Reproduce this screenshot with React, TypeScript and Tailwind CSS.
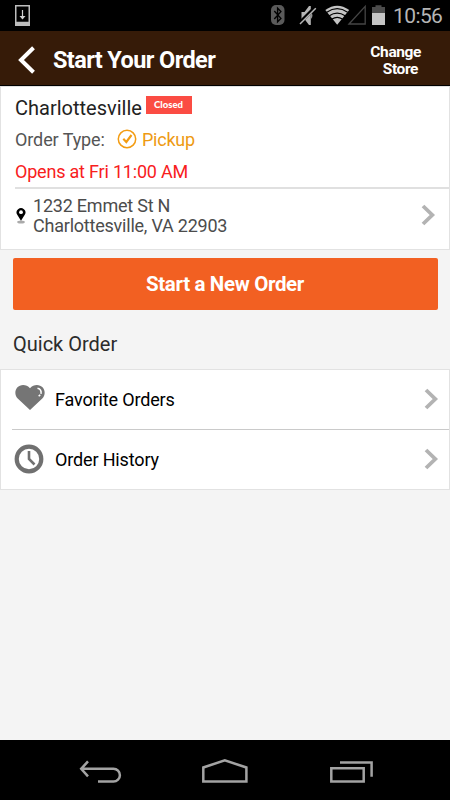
import { clsx } from 'clsx';

function ChevronRight({ className }: { className?: string }) {
  return (
    <svg width="15" height="22" viewBox="0 0 15 22" className={clsx('flex-shrink-0', className)}>
      <path d="M2 2 L11.3 11 L2 20" fill="none" stroke="#b3b3b3" strokeWidth="3.8" />
    </svg>
  );
}

function StatusBar() {
  return (
    <div className="flex h-[31px] items-center justify-between bg-black">
      <svg width="32" height="31" viewBox="0 0 32 31">
        <path d="M15 5h15v21H15z M16.5 6.5v15.3h12V6.5z" fill="#bdbdbd" fillRule="evenodd" />
        <path d="M22.5 10v8" stroke="#d0d0d0" strokeWidth="1.2" />
        <path d="M19.5 16h6l-3 3.6z" fill="#d0d0d0" />
      </svg>
      <div className="flex items-center">
        <svg width="130" height="31" viewBox="262 0 130 31">
          {/* bluetooth */}
          <rect x="271" y="5" width="13.5" height="20" rx="5" fill="#5a5a5a" />
          <path d="M274.3 11l6.6 7.4-3.3 3.4V8.2l3.3 3.4-6.6 7.4" fill="none" stroke="#000" strokeWidth="1.4" />
          {/* muted ringer */}
          <path d="M301.5 12h3l4.5-6h1.8v19H309l-4.5-6h-3z" fill="#b5b5b5" />
          <path d="M311.2 12q2.4 3.5 0 7z" fill="#b5b5b5" />
          <path d="M299 23.5L315.3 7.2" stroke="#000" strokeWidth="3.6" />
          <path d="M300 24L315.8 8.2" stroke="#b5b5b5" strokeWidth="1.5" />
          {/* wifi */}
          <path d="M325.3 10Q337.2 1.5 349.2 10L337.2 24.7z" fill="#c4c4c4" />
          <g fill="none" stroke="#000" strokeWidth="1.2">
            <path d="M326.8 12.2q10.4-7 20.8 0" />
            <path d="M329.3 15.7q7.9-5.2 15.8 0" />
            <path d="M332 19q5.2-3.3 10.4 0" />
          </g>
          {/* signal */}
          <path d="M349 24L365.2 6.3V24z" fill="none" stroke="#454545" strokeWidth="1.3" />
          {/* battery */}
          <path d="M372 7h3.5V5.2h6V7h3.5v6h-13z" fill="#4c4c4c" />
          <path d="M372 13h13v12h-13z" fill="#c4c4c4" />
        </svg>
        <span className="w-[58px] pl-[1px] pt-[2px] text-[21px] leading-[31px] tracking-[-0.6px] text-[#b5b5b5]">10:56</span>
      </div>
    </div>
  );
}

function Header() {
  return (
    <header className="flex h-[55px] items-center border-b border-black bg-[#361b08] text-white">
      <svg width="53" height="54" viewBox="0 31 53 54" className="flex-shrink-0">
        <path d="M33.5 47.8L21 60l12.5 12.2" fill="none" stroke="#fff" strokeWidth="4" />
      </svg>
      <h1 className="flex-1 whitespace-nowrap pt-[3px] text-[23.5px] font-bold leading-[30px] tracking-[-0.6px]">Start Your Order</h1>
      <div className="mr-[29px] flex flex-col items-end whitespace-nowrap pt-[6px] text-[15.5px] font-bold leading-[17px] tracking-[-0.4px]">
        <span>Change</span>
        <span className="pr-[3px]">Store</span>
      </div>
    </header>
  );
}

function StoreCard() {
  return (
    <section className="h-[164px] border border-[#e2e2e2] bg-white pl-[14px]">
      <div className="flex h-[37px] items-start">
        <h2 className="w-[131px] whitespace-nowrap pt-[8px] text-[20px] leading-[26px] text-[#222]">Charlottesville</h2>
        <span className="mt-[9px] h-[18px] w-[46px] bg-[#fb4c43] pr-[1px] text-center font-[Lato,sans-serif] text-[9.5px] font-black leading-[18px] text-white">
          Closed
        </span>
      </div>
      <div className="flex h-[31px] items-center text-[18px] tracking-[-0.1px]">
        <span className="w-[101px] whitespace-nowrap text-[#555]">Order Type:</span>
        <svg width="26" height="22" viewBox="0 0 26 22" className="mb-[1px] flex-shrink-0">
          <circle cx="11" cy="11" r="8.7" fill="none" stroke="#f39c12" strokeWidth="1.5" />
          <path d="M7.3 10.8l3 3.2L15.5 7" fill="none" stroke="#f39c12" strokeWidth="2.1" />
        </svg>
        <span className="tracking-[-0.25px] text-[#ee9a12]">Pickup</span>
      </div>
      <p className="h-[32px] whitespace-nowrap text-[18px] leading-[33px] tracking-[-0.2px] text-[#f8201c]">Opens at Fri 11:00 AM</p>
      <div className="flex h-[62px] items-center border-t-2 border-[#e0e0e0]">
        <svg width="18" height="20" viewBox="0 0 18 20" className="-mt-[6px] flex-shrink-0">
          <ellipse cx="6" cy="16" rx="3.8" ry="1.5" fill="#aaa" />
          <path d="M6 14.7L2.4 9A4.4 4.4 0 1 1 9.6 9z" fill="#000" />
          <circle cx="6" cy="6.2" r="1.9" fill="#fff" />
        </svg>
        <address className="flex-1 whitespace-nowrap pb-[6px] text-[18px] not-italic leading-[20px] tracking-[-0.22px] text-[#4c4c4c]">
          1232 Emmet St N
          <br />
          Charlottesville, VA 22903
        </address>
        <ChevronRight className="mr-[13px] -mt-[8px]" />
      </div>
    </section>
  );
}

function HeartIcon() {
  return (
    <svg width="30" height="27" viewBox="0 0 30 27">
      <path d="M15 26L2.7 14.5C-.5 11-.2 6.5 2.2 3.6C5.500 0 11.500 .3 15 4.200C18.500 .3 24.500 0 27.800 3.600C30.200 6.500 30.500 11 27.300 14.500z" fill="#757575" />
      <path d="M22.500 4.200q4.300 1 3.500 5.600" fill="none" stroke="#fff" strokeWidth="1.5" />
      <path d="M25.200 10.700l-1.500 1.600" stroke="#fff" strokeWidth="1.5" />
    </svg>
  );
}

function ClockIcon() {
  return (
    <svg width="30" height="30" viewBox="0 0 30 30">
      <circle cx="15" cy="15" r="12.3" fill="none" stroke="#707070" strokeWidth="4.2" />
      <path d="M15 7v8l5.5 5.5" fill="none" stroke="#707070" strokeWidth="2.6" />
    </svg>
  );
}

const quickLinks = [
  { label: 'Favorite Orders', Icon: HeartIcon, offset: '-mt-[5px]' },
  { label: 'Order History', Icon: ClockIcon, offset: '-mt-[1px]' },
];

function QuickOrderList() {
  return (
    <ul className="h-[121px] border border-[#e2e2e2] bg-white pl-[11px]">
      {quickLinks.map(({ label, Icon, offset }, i) => (
        <li
          key={label}
          className={clsx('flex items-center', i === 0 ? 'h-[60px] border-b border-[#cacaca] pl-[3px]' : 'h-[59px] pl-[2px]')}
        >
          <span className={clsx('flex-shrink-0', i === 0 ? 'w-[40px]' : 'w-[41px]')}>
            <span className={clsx('block', offset)}>
              <Icon />
            </span>
          </span>
          <span className="flex-1 whitespace-nowrap text-[18px] tracking-[-0.15px] text-black">{label}</span>
          <ChevronRight className="-mt-[1px] mr-[10px]" />
        </li>
      ))}
    </ul>
  );
}

function NavBar() {
  return (
    <nav className="mt-auto flex h-[60px] justify-center bg-black">
      <svg width="450" height="60" viewBox="0 740 450 60" fill="none" stroke="#a3a3a3" strokeWidth="2.5">
        <path d="M88 761.3l-6.8 7.5 6.8 7.5M81 768.8h32.5a6.4 6.4 0 0 1 0 12.8H98" />
        <path d="M203.3 781.5v-14l21.5-7.2 21.6 7.2v14z" />
        <path d="M331.3 768.3h32.4v13.2h-32.4zM340 762.4h31.6v14.4" />
      </svg>
    </nav>
  );
}

export default function App() {
  return (
    <div className="flex h-[800px] w-[450px] flex-col overflow-hidden bg-[#f4f4f4] font-[Roboto,sans-serif]">
      <StatusBar />
      <Header />
      <StoreCard />
      <button className="mx-[12.5px] mt-[8px] h-[52px] rounded-[2px] bg-[#f26022] text-[20.5px] font-bold tracking-[-0.35px] text-white">
        Start a New Order
      </button>
      <h3 className="h-[59px] pl-[13px] pt-[21px] text-[20px] leading-[26px] text-[#2b2b2b]">Quick Order</h3>
      <QuickOrderList />
      <NavBar />
    </div>
  );
}
